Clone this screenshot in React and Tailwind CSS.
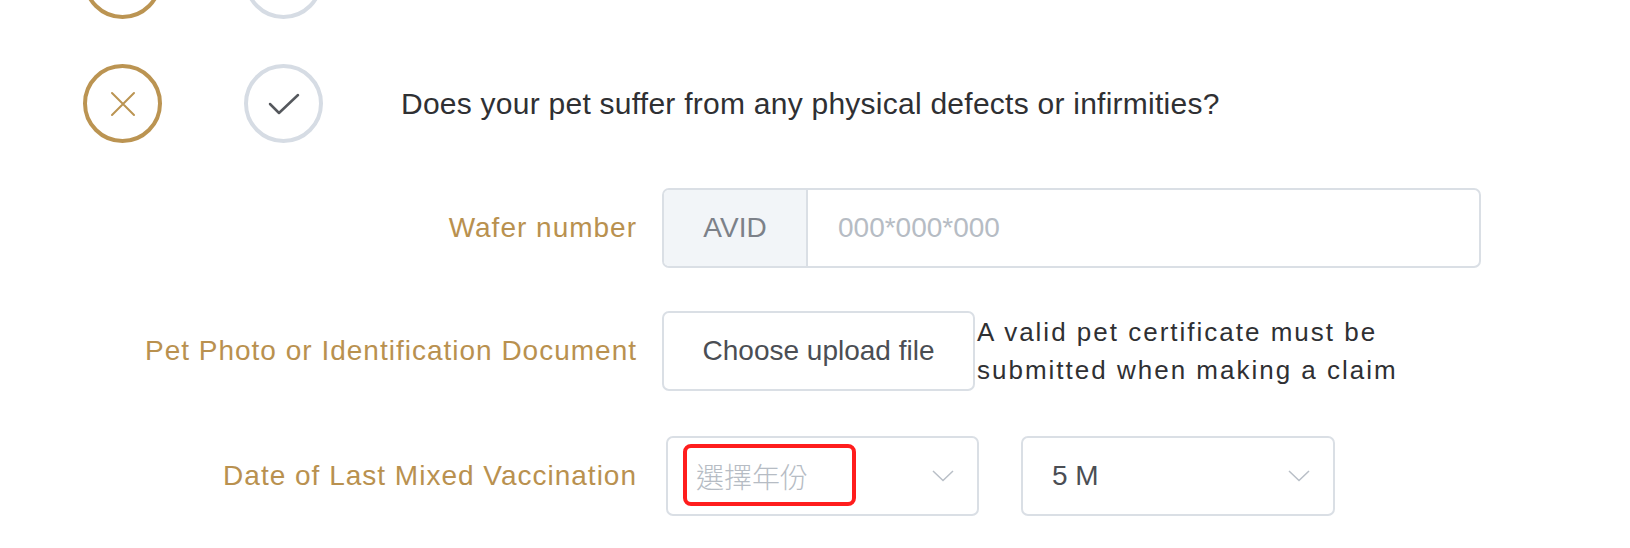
const Circle = ({ tone, children }) => (
  <div
    className={
      tone === 'gold'
        ? 'w-[79px] h-[79px] rounded-full border-4 border-[#bb9452] flex items-center justify-center shrink-0'
        : 'w-[79px] h-[79px] rounded-full border-4 border-[#d6dce4] flex items-center justify-center shrink-0'
    }
  >
    {children}
  </div>
);

const Chevron = () => (
  <svg width="22" height="12" viewBox="0 0 22 12" fill="none" className="shrink-0">
    <polyline points="1,1 11,10.5 21,1" stroke="#b9bfc7" strokeWidth="1.5" />
  </svg>
);

const Label = ({ children }) => (
  <div className="w-[637px] shrink-0 text-right text-[28px] tracking-[1px] text-[#b9914f]">{children}</div>
);

export default function App() {
  return (
    <div className="w-[1630px] h-[548px] overflow-hidden bg-white font-['Liberation_Sans',Arial,sans-serif]">
      <div className="flex flex-col mt-[-60px]">
        <div className="flex items-center pl-[83px] gap-[82px]">
          <Circle tone="gold" />
          <Circle tone="gray" />
        </div>

        <div className="flex items-center pl-[83px] mt-[45px]">
          <Circle tone="gold">
            <svg width="26" height="26" viewBox="0 0 26 26" fill="none">
              <path d="M2 2 L24 24 M24 2 L2 24" stroke="#bb9452" strokeWidth="2" strokeLinecap="round" />
            </svg>
          </Circle>
          <div className="ml-[82px]">
            <Circle tone="gray">
              <svg width="32" height="24" viewBox="0 0 32 24" fill="none">
                <polyline points="2,12 11,21 30,3" stroke="#55585d" strokeWidth="2.5" strokeLinecap="round" strokeLinejoin="round" />
              </svg>
            </Circle>
          </div>
          <p className="ml-[78px] text-[30px] tracking-[0.25px] text-[#2f3033]">Does your pet suffer from any physical defects or infirmities?</p>
        </div>

        <div className="flex items-center gap-[25px] mt-[45px]">
          <Label>Wafer number</Label>
          <div className="flex w-[819px] h-[80px] rounded-[7px] border-2 border-[#dadfe5] overflow-hidden">
            <div className="w-[144px] flex items-center justify-center bg-[#f2f5f8] border-r-2 border-[#dadfe5] text-[28px] text-[#7c8189]">AVID</div>
            <div className="flex-1 flex items-center pl-[30px] text-[28px] text-[#b6bcc4]">000*000*000</div>
          </div>
        </div>

        <div className="flex items-center gap-[25px] mt-[43px]">
          <Label>Pet Photo or Identification Document</Label>
          <div className="flex items-center">
            <button className="w-[313px] h-[80px] rounded-[7px] border-2 border-[#dadfe5] bg-white text-[28px] text-[#4b4e54]">Choose upload file</button>
            <p className="ml-[2px] text-[26px] leading-[38px] tracking-[2px] text-[#2f3033]">
              A valid pet certificate must be
              <br />
              submitted when making a claim
            </p>
          </div>
        </div>

        <div className="flex items-center gap-[25px] mt-[45px]">
          <Label>Date of Last Mixed Vaccination</Label>
          <div className="flex items-center gap-[42px] ml-[4px]">
            <div className="relative w-[313px] h-[80px] rounded-[7px] border-2 border-[#dadfe5] flex items-center justify-between pl-[28px] pr-[23px]">
              <span className="text-[28px] text-[#b6bcc4] font-['Noto_Sans_CJK_TC',sans-serif] font-light">選擇年份</span>
              <Chevron />
              <div className="absolute left-[15px] top-[6px] w-[173px] h-[62px] rounded-[8px] border-[4px] border-[#ff1d1d]" />
            </div>
            <div className="w-[314px] h-[80px] rounded-[7px] border-2 border-[#dadfe5] flex items-center justify-between pl-[29px] pr-[23px]">
              <span className="text-[28px] text-[#4b4e54]">5 M</span>
              <Chevron />
            </div>
          </div>
        </div>
      </div>
    </div>
  );
}
